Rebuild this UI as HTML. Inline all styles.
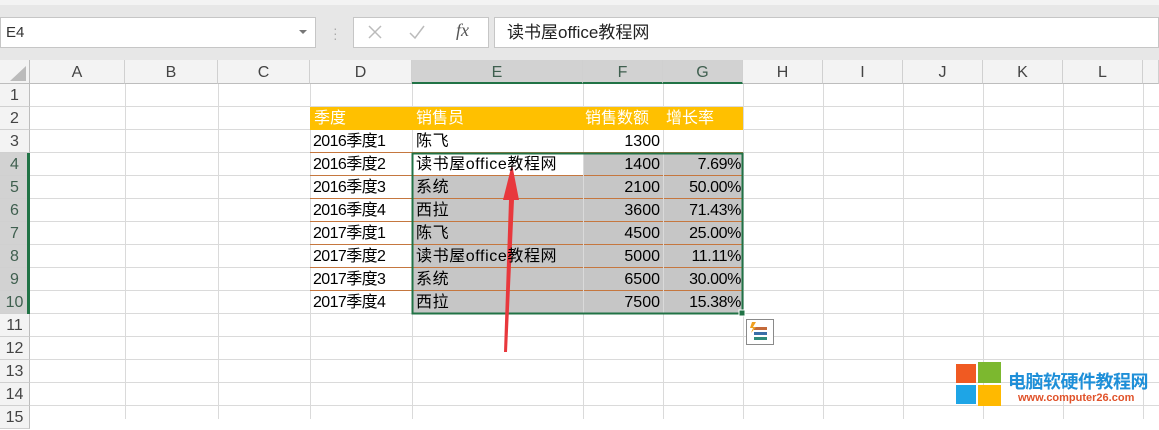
<!DOCTYPE html><html><head><meta charset="utf-8"><style>
body{margin:0;width:1159px;height:419px;overflow:hidden;background:#fff;font-family:"Liberation Sans","Noto Sans CJK SC",sans-serif;position:relative}
div{position:absolute;box-sizing:border-box}
.t{font-size:16px;color:#000;white-space:nowrap;line-height:23px}
.ch{top:60px;height:24px;font-size:16px;color:#444;text-align:center;line-height:26px;border-right:1px solid #d0d0d0;background:#f3f3f3;border-bottom:1px solid #bdbdbd}
.rh{left:0;width:30px;height:23px;font-size:16px;color:#444;text-align:center;line-height:24px;background:#f3f3f3;border-bottom:1px solid #d0d0d0;border-right:1px solid #bdbdbd}
.s{background:#d2d2d2 !important;color:#3f5f4f !important}
</style></head><body>
<div style="left:0;top:0;width:1159px;height:60px;background:#e7e7e7"></div>
<div style="left:0;top:0;width:1159px;height:5px;background:#f3f3f3"></div>
<div style="left:0;top:17px;width:316px;height:31px;background:#fff;border:1px solid #c6c6c6;font-size:15px;line-height:29px;padding-left:5px;color:#333">E4</div>
<div style="left:299px;top:30px;width:0;height:0;border-left:4px solid transparent;border-right:4px solid transparent;border-top:4px solid #777"></div>
<div style="left:333px;top:26px;color:#aaa;font-size:14px;line-height:5px">·<br>·<br>·</div>
<div style="left:353px;top:17px;width:136px;height:31px;background:#fff;border:1px solid #c6c6c6"></div>
<svg style="position:absolute;left:353px;top:17px" width="136" height="31"><path d="M16 9l12 12M28 9L16 21" stroke="#bbb" stroke-width="1.5"/><path d="M57 16l5 5 9-12" stroke="#bbb" stroke-width="1.5" fill="none"/></svg>
<div style="left:456px;top:20px;color:#555;font-size:18px;font-style:italic;font-family:'Liberation Serif',serif">fx</div>
<div style="left:494px;top:17px;width:665px;height:31px;background:#fff;border:1px solid #c6c6c6;font-size:17px;line-height:29px;padding-left:12px;color:#222">读书屋office教程网</div>
<div style="left:0;top:60px;width:30px;height:24px;background:#f3f3f3;border-right:1px solid #bdbdbd;border-bottom:1px solid #bdbdbd"></div>
<div style="left:10px;top:66px;width:0;height:0;border-left:16px solid transparent;border-bottom:15px solid #bbb"></div>
<div class="ch" style="left:30px;width:95px">A</div>
<div class="ch" style="left:125px;width:93px">B</div>
<div class="ch" style="left:218px;width:92px">C</div>
<div class="ch" style="left:310px;width:102px">D</div>
<div class="ch s" style="left:412px;width:171px;border-bottom:2px solid #217346">E</div>
<div class="ch s" style="left:583px;width:80px;border-bottom:2px solid #217346">F</div>
<div class="ch s" style="left:663px;width:80px;border-bottom:2px solid #217346">G</div>
<div class="ch" style="left:743px;width:80px">H</div>
<div class="ch" style="left:823px;width:80px">I</div>
<div class="ch" style="left:903px;width:80px">J</div>
<div class="ch" style="left:983px;width:80px">K</div>
<div class="ch" style="left:1063px;width:80px">L</div>
<div class="ch" style="left:1143px;width:16px"></div>
<svg style="position:absolute;left:0;top:0" width="1159" height="419">
<g stroke="#dadada" stroke-width="1">
<path d="M125.5 84V419M218.5 84V419M310.5 84V419M412.5 84V419M583.5 84V419M663.5 84V419M743.5 84V419M823.5 84V419M903.5 84V419M983.5 84V419M1063.5 84V419M1143.5 84V419"/>
<path d="M30 106.5H1159M30 129.5H1159M30 152.5H1159M30 175.5H1159M30 198.5H1159M30 221.5H1159M30 244.5H1159M30 267.5H1159M30 290.5H1159M30 313.5H1159M30 336.5H1159M30 359.5H1159M30 382.5H1159M30 405.5H1159"/>
</g></svg>
<div style="left:310px;top:107px;width:433px;height:23px;background:#ffc000"></div>
<div style="left:412px;top:153px;width:331px;height:161px;background:#c6c6c6"></div>
<div style="left:412px;top:153px;width:171px;height:23px;background:#fff"></div>
<svg style="position:absolute;left:0;top:0" width="1159" height="419">
<g stroke="#c5773f" stroke-width="1">
<path d="M310 152.5H743M310 175.5H743M310 198.5H743M310 221.5H743M310 244.5H743M310 267.5H743M310 290.5H743"/></g>
<g stroke="#dadada"><path d="M583.5 153V314M663.5 153V314"/></g>
<rect x="412.5" y="153.5" width="330" height="160" fill="none" stroke="#217346" stroke-width="2"/>
<rect x="739" y="310" width="6" height="6" fill="#217346" stroke="#fff"/>
<path d="M504 352 L509 200 L503 200 L512 164 L519 200 L514 200 L507 352Z" fill="#e8383d"/>
<rect x="746.5" y="319.5" width="27" height="25" fill="#fff" stroke="#8a8a8a"/>
<rect x="754" y="327" width="13" height="3" fill="#c46a3a"/><rect x="754" y="332" width="13" height="3" fill="#3a6fa8"/><rect x="754" y="337" width="13" height="3" fill="#2e8a7a"/>
<path d="M752 322 l4 0 -3 5 3 0 -5 6 2-5 -3 0z" fill="#f0a020"/>
</svg>
<div class="rh" style="top:84px">1</div><div class="rh" style="top:107px">2</div><div class="rh" style="top:130px">3</div>
<div class="rh s" style="top:153px">4</div><div class="rh s" style="top:176px">5</div><div class="rh s" style="top:199px">6</div><div class="rh s" style="top:222px">7</div><div class="rh s" style="top:245px">8</div><div class="rh s" style="top:268px">9</div><div class="rh s" style="top:291px">10</div>
<div class="rh" style="top:314px">11</div><div class="rh" style="top:337px">12</div><div class="rh" style="top:360px">13</div><div class="rh" style="top:383px">14</div><div class="rh" style="top:406px">15</div>
<div style="left:27px;top:153px;width:3px;height:161px;background:#217346"></div>
<div class="t" style="left:314px;top:107px;color:#fff">季度</div>
<div class="t" style="left:416px;top:107px;color:#fff">销售员</div>
<div class="t" style="left:585px;top:107px;color:#fff">销售数额</div>
<div class="t" style="left:666px;top:107px;color:#fff">增长率</div>
<div class="t" style="left:313px;top:130px;letter-spacing:-0.6px">2016季度1<br>2016季度2<br>2016季度3<br>2016季度4<br>2017季度1<br>2017季度2<br>2017季度3<br>2017季度4</div>
<div class="t" style="left:416px;top:130px;letter-spacing:0.6px">陈飞<br>读书屋office教程网<br>系统<br>西拉<br>陈飞<br>读书屋office教程网<br>系统<br>西拉</div>
<div class="t" style="left:583px;width:77px;top:130px;text-align:right">1300<br>1400<br>2100<br>3600<br>4500<br>5000<br>6500<br>7500</div>
<div class="t" style="left:663px;width:78px;top:153px;text-align:right;letter-spacing:-0.4px">7.69%<br>50.00%<br>71.43%<br>25.00%<br>11.11%<br>30.00%<br>15.38%</div>
<div style="left:956px;top:364px;width:20px;height:19px;background:#f05a22"></div>
<div style="left:978px;top:362px;width:23px;height:21px;background:#7cb82f"></div>
<div style="left:956px;top:385px;width:20px;height:19px;background:#1ea5e6"></div>
<div style="left:978px;top:385px;width:23px;height:21px;background:#ffb900"></div>
<div style="left:1008px;top:368px;font-size:18px;font-weight:bold;color:#1e8fd8;white-space:nowrap;letter-spacing:-0.5px">电脑软硬件教程网</div>
<div style="left:1018px;top:392px;font-size:11px;font-weight:bold;color:#e0522a;white-space:nowrap">www.computer26.com</div>
</body></html>
